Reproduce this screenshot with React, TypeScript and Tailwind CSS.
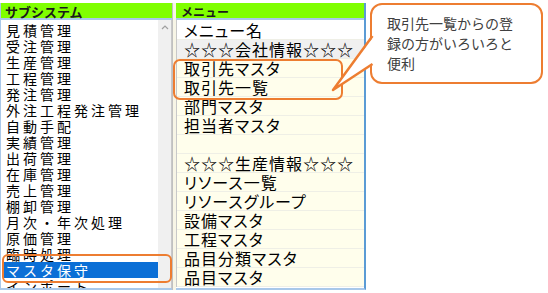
import React from "react";

const subsystems = [
  "見積管理",
  "受注管理",
  "生産管理",
  "工程管理",
  "発注管理",
  "外注工程発注管理",
  "自動手配",
  "実績管理",
  "出荷管理",
  "在庫管理",
  "売上管理",
  "棚卸管理",
  "月次・年次処理",
  "原価管理",
  "臨時処理",
  "マスタ保守",
  "インポート",
];

const menus: { label: string; tone: "white" | "gray" | "cream" }[] = [
  { label: "メニュー名", tone: "white" },
  { label: "☆☆☆会社情報☆☆☆", tone: "gray" },
  { label: "取引先マスタ", tone: "cream" },
  { label: "取引先一覧", tone: "cream" },
  { label: "部門マスタ", tone: "cream" },
  { label: "担当者マスタ", tone: "cream" },
  { label: "", tone: "cream" },
  { label: "☆☆☆生産情報☆☆☆", tone: "cream" },
  { label: "リソース一覧", tone: "cream" },
  { label: "リソースグループ", tone: "cream" },
  { label: "設備マスタ", tone: "cream" },
  { label: "工程マスタ", tone: "cream" },
  { label: "品目分類マスタ", tone: "cream" },
  { label: "品目マスタ", tone: "cream" },
];

const jp = "font-['Noto_Sans_CJK_JP',sans-serif]";

export default function App() {
  return (
    <div className={`relative w-[548px] h-[293px] bg-white overflow-hidden text-black ${jp}`}>
      <div className="flex pt-[3px]">
        {/* サブシステム */}
        <div className="w-[172px] h-[287px] flex flex-col border-l border-b-2 border-[#a9c8ea] overflow-hidden">
          <div className="h-[17px] bg-[#80ff00] border-b-2 border-[#a9c8ea] pl-[4px] text-[13px] leading-[17px] font-bold text-[#1a1a1a] shrink-0">
            サブシステム
          </div>
          <div className="flex flex-1 overflow-hidden">
            <div className="flex-1 pt-[2px] pl-[2px] overflow-hidden">
              {subsystems.map((s) => (
                <div
                  key={s}
                  className={`h-[16px] pl-[3px] text-[14px] leading-[16px] tracking-[3px] whitespace-nowrap ${
                    s === "マスタ保守" ? "bg-[#0b6fd6] text-white" : ""
                  }`}
                >
                  {s}
                </div>
              ))}
            </div>
            <div className="w-[14px] bg-[#f0f0f0] border-r border-[#c8c8c8] flex justify-center pt-[5px]">
              <svg width="8" height="5" viewBox="0 0 8 5">
                <path d="M1 4 L4 1 L7 4" fill="none" stroke="#a0a0a0" strokeWidth="1.2" />
              </svg>
            </div>
          </div>
        </div>

        <div className="w-[4px] h-[287px] bg-[#f7f5e6] border-l border-[#c0c0c0]" />

        {/* メニュー */}
        <div className="w-[190px] h-[287px] flex flex-col border-r-2 border-r-[#5b9bd5] border-b-2 border-b-[#a9c8ea] overflow-hidden">
          <div className="h-[17px] bg-[#80ff00] border-b-2 border-[#a9c8ea] pl-[5px] text-[12px] leading-[17px] font-bold text-[#1a1a1a] shrink-0">
            メニュー
          </div>
          <div className="pt-[1px] border-l border-[#c8c8c8]">
            {menus.map((m, i) => (
              <div
                key={i}
                className={`h-[19px] pl-[7px] text-[16px] leading-[19px] tracking-[1px] [font-feature-settings:'palt'] whitespace-nowrap border-b border-[#efefe6] ${
                  m.tone === "white" ? "bg-white" : m.tone === "gray" ? "bg-[#f0f0f0]" : "bg-[#fffeec]"
                }`}
              >
                {m.label}
              </div>
            ))}
          </div>
        </div>
      </div>

      {/* highlights */}
      <div className="absolute left-[173px] top-[59px] w-[170px] h-[41px] border-[2.5px] border-[#ed7d31] rounded-[7px]" />
      <div className="absolute left-[2px] top-[254px] w-[170px] h-[29px] border-[2.5px] border-[#ed7d31] rounded-[6px]" />

      {/* callout */}
      <div className="absolute left-[370px] top-[3px] w-[173px] h-[81px] border-[2.5px] border-[#ed7d31] rounded-[12px] bg-white pl-[15px] pt-[8px] text-[14px] leading-[20px] text-[#404040]">
        <div>取引先一覧からの登</div>
        <div>録の方がいろいろと</div>
        <div>便利</div>
      </div>
      <svg className="absolute left-0 top-0" width="548" height="293" viewBox="0 0 548 293">
        <polygon points="374,36 333,90 374,64" fill="white" />
        <polyline points="372.5,36 333,90 372.5,64" fill="none" stroke="#ed7d31" strokeWidth="2.5" strokeLinejoin="round" />
      </svg>
    </div>
  );
}
